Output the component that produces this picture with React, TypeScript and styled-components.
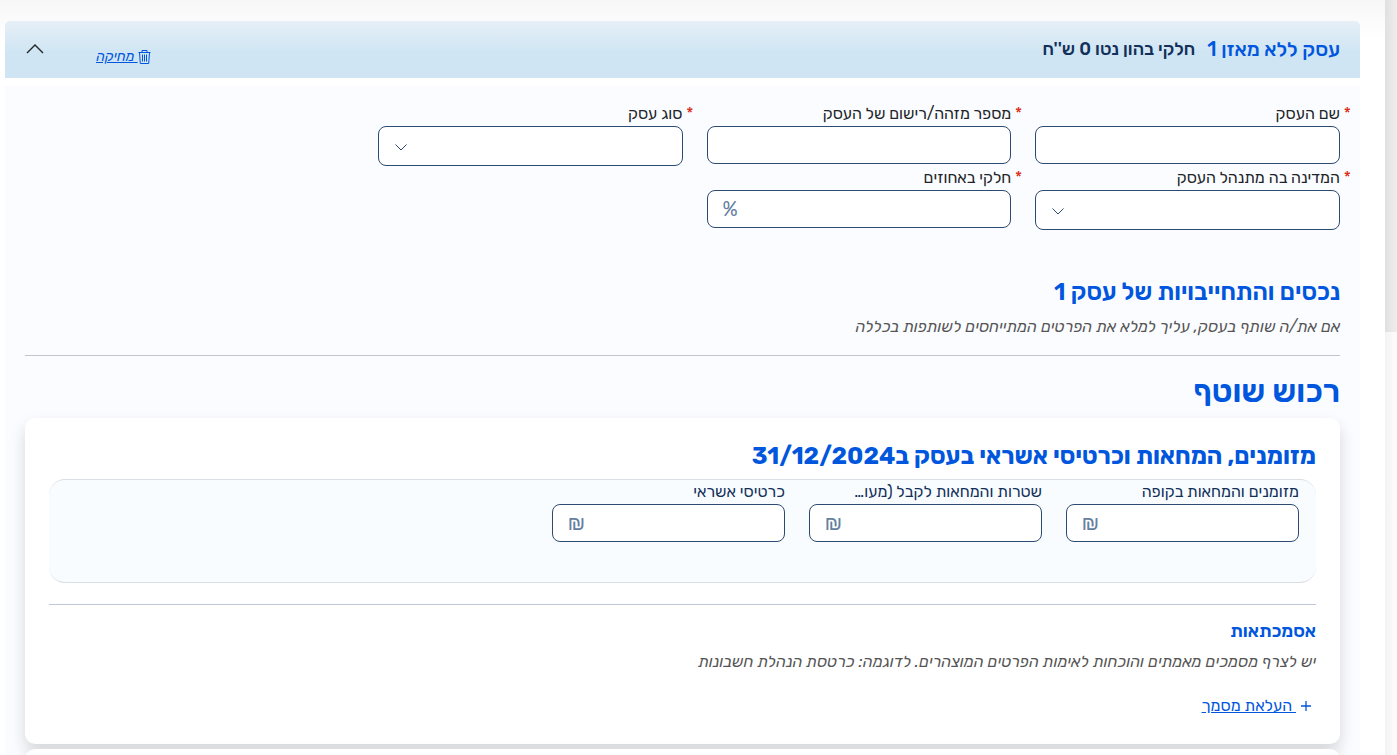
import React, { useId } from "react";
import styled, { createGlobalStyle } from "styled-components";

const GlobalStyle = createGlobalStyle`
  * { box-sizing: border-box; }
  body {
    margin: 0;
    background: #fafafa;
    color: #212529;
    font-family: Rubik, "Open Sans", "Liberation Sans", sans-serif;
    font-size: 16px;
    line-height: 24px;
  }
  button, input, select { font: inherit; color: inherit; }
  h1, h2, h3, h4, p { margin: 0; }
`;

const Page = styled.div`
  display: flex;
  height: 100vh;
  overflow: hidden;
`;

const Sheet = styled.main`
  flex: 1;
  min-width: 0;
  padding: 21px 25px 0 5px;
  background: linear-gradient(#f7f7f7, #fff 40px);
`;

const Gutter = styled.div`
  width: 12px;
  background: linear-gradient(to right, #e0e0e0, #ececec 10px) top / 100% 332px no-repeat,
    linear-gradient(to right, #f3f3f3, #fbfbfb 10px);
`;

const Header = styled.header`
  display: flex;
  align-items: center;
  height: 57px;
  padding: 0 20px 2px 21px;
  border-radius: 5px 5px 0 0;
  background: linear-gradient(#e6eff7, #cfe5f3 32px);
`;

const HeaderTitle = styled.h2`
  color: #0056dd;
  font-size: 20px;
  font-weight: 500;
  margin-inline-end: 12px;
`;

const HeaderNote = styled.span`
  color: #12305a;
  font-size: 18px;
  font-weight: 500;
  flex: 1;
`;

const DeleteButton = styled.button`
  display: flex;
  align-items: center;
  margin-top: 17px;
  margin-inline-end: 52px;
  padding: 0;
  border: 0;
  background: none;
  color: #0056dd;
  font-size: 14px;
  font-style: italic;
  text-decoration: underline;
  white-space: pre;
`;

const CollapseButton = styled.button`
  display: flex;
  padding: 0;
  border: 0;
  background: none;
  color: #212529;
`;

const Body = styled.section`
  margin-top: 8px;
  padding: 16px 20px 40px;
  background: #fbfcff;
`;

const FieldGrid = styled.div`
  display: grid;
  grid-template-columns: repeat(4, 1fr);
  column-gap: 24px;
  margin-inline-end: 24px;
`;

const MoneyGrid = styled.div`
  display: grid;
  grid-template-columns: repeat(5, 1fr);
  column-gap: 24px;
  margin-inline-end: -11px;
`;

const FieldBox = styled.div`
  min-width: 0;
  min-height: 64px;
`;

const Label = styled.label<{ $required?: boolean; $navy?: boolean }>`
  display: flex;
  gap: 4px;
  margin-inline-start: ${(p) => (p.$required ? "-11px" : "0")};
  color: ${(p) => (p.$navy ? "#12305a" : "#212529")};
  white-space: nowrap;
`;

const LabelText = styled.span`
  overflow: hidden;
  text-overflow: ellipsis;
`;

const Star = styled.span`
  width: 7px;
  color: #d9301a;
`;

const Control = styled.div<{ $tall?: boolean }>`
  display: flex;
  align-items: center;
  height: ${(p) => (p.$tall ? 40 : 38)}px;
  border: 1px solid #2d4a73;
  border-radius: 8px;
  background: #fff;
  color: #64809f;
`;

const Input = styled.input`
  flex: 1;
  min-width: 0;
  height: 100%;
  padding: 0 12px;
  border: 0;
  outline: 0;
  background: none;
`;

const Select = styled.select`
  flex: 1;
  min-width: 0;
  height: 100%;
  padding: 0 12px;
  border: 0;
  outline: 0;
  appearance: none;
  background: none;
`;

const Unit = styled.span`
  margin-inline-end: 15px;
  font-size: 20px;
`;

const ArrowIcon = styled.svg`
  margin-inline-end: 16px;
  margin-top: 2px;
  color: #2d4a73;
`;

const SectionTitle = styled.h2`
  margin-top: 46px;
  color: #0056dd;
  font-size: 24px;
  font-weight: 600;
  line-height: 32px;
`;

const Hint = styled.p`
  margin-top: 7px;
  color: #555;
  font-style: italic;
`;

const Rule = styled.hr<{ $blue?: boolean }>`
  height: 1px;
  margin: ${(p) => (p.$blue ? "21px 0 14px" : "16px 0 15px")};
  border: 0;
  background: ${(p) => (p.$blue ? "#bcc8d8" : "#c0c5cc")};
`;

const GroupTitle = styled.h1`
  color: #0056dd;
  font-size: 32px;
  font-weight: 600;
  line-height: 40px;
`;

const Card = styled.section`
  min-height: 326px;
  margin-top: 7px;
  padding: 24px;
  border-radius: 10px;
  background: #fff;
  box-shadow: 0 8px 16px rgba(0, 0, 0, 0.15);

  & + & { margin-top: 5px; }
`;

const CardTitle = styled.h3`
  color: #0056dd;
  font-size: 24px;
  font-weight: 700;
  line-height: 28px;
`;

const MoneyPanel = styled.div`
  height: 104px;
  margin-top: 9px;
  padding-inline-start: 17px;
  border: solid #dadfe5;
  border-width: 1px 0;
  border-radius: 16px;
  background: #f8fcff;
`;

const SubTitle = styled.h4`
  color: #0056dd;
  font-size: 18px;
  font-weight: 600;
`;

const Upload = styled.div`
  display: flex;
  align-items: center;
  gap: 5px;
  margin-top: 20px;
  padding-inline-start: 5px;
  color: #0056dd;
`;

const UploadLink = styled.a`
  color: #0056dd;
  white-space: pre;
`;

type FieldProps = {
  label: string;
  required?: boolean;
  select?: boolean;
  unit?: string;
};

function Field({ label, required, select, unit }: FieldProps) {
  const id = useId();
  return (
    <FieldBox>
      <Label htmlFor={id} $required={required} $navy={!required}>
        {required && <Star>*</Star>}
        <LabelText>{label}</LabelText>
      </Label>
      <Control $tall={select}>
        {select ? <Select id={id} /> : <Input id={id} type="text" />}
        {select && (
          <ArrowIcon width="12" height="7" viewBox="0 0 12 7" fill="none" stroke="currentColor">
            <path d="M0.5 0.5 6 6 11.5 0.5" />
          </ArrowIcon>
        )}
        {unit && <Unit>{unit}</Unit>}
      </Control>
    </FieldBox>
  );
}

export default function App() {
  return (
    <Page dir="rtl" lang="he">
      <GlobalStyle />
      <Gutter />
      <Sheet>
        <Header>
          <HeaderTitle>עסק ללא מאזן 1</HeaderTitle>
          <HeaderNote>חלקי בהון נטו 0 ש''ח</HeaderNote>
          <DeleteButton type="button">
            <svg width="13" height="14" viewBox="0 0 13 14" fill="none" stroke="currentColor">
              <path d="M0.5 2.5H12.5M4 2.5V0.5H9V2.5M1.5 2.5 2.3 13.5H10.7L11.5 2.5M4.5 4.5V11.5M6.5 4.5V11.5M8.5 4.5V11.5" />
            </svg>
            {" מחיקה"}
          </DeleteButton>
          <CollapseButton type="button" aria-label="סגירה">
            <svg width="18" height="10" viewBox="0 0 18 10" fill="none" stroke="currentColor" strokeWidth="1.4">
              <path d="M1 9 9 1 17 9" />
            </svg>
          </CollapseButton>
        </Header>
        <Body>
          <FieldGrid>
            <Field label="שם העסק" required />
            <Field label="מספר מזהה/רישום של העסק" required />
            <Field label="סוג עסק" required select />
            <span />
            <Field label="המדינה בה מתנהל העסק" required select />
            <Field label="חלקי באחוזים" required unit="%" />
          </FieldGrid>
          <SectionTitle>נכסים והתחייבויות של עסק 1</SectionTitle>
          <Hint>אם את/ה שותף בעסק, עליך למלא את הפרטים המתייחסים לשותפות בכללה</Hint>
          <Rule />
          <GroupTitle>רכוש שוטף</GroupTitle>
          <Card>
            <CardTitle>מזומנים, המחאות וכרטיסי אשראי בעסק ב31/12/2024</CardTitle>
            <MoneyPanel>
              <MoneyGrid>
                <Field label="מזומנים והמחאות בקופה" unit="₪" />
                <Field label="שטרות והמחאות לקבל (מעו…" unit="₪" />
                <Field label="כרטיסי אשראי" unit="₪" />
              </MoneyGrid>
            </MoneyPanel>
            <Rule $blue />
            <SubTitle>אסמכתאות</SubTitle>
            <Hint>יש לצרף מסמכים מאמתים והוכחות לאימות הפרטים המוצהרים. לדוגמה: כרטסת הנהלת חשבונות</Hint>
            <Upload>
              <svg width="10" height="10" viewBox="0 0 10 10" stroke="currentColor" strokeWidth="1.3">
                <path d="M5 0V10M0 5H10" />
              </svg>
              <UploadLink href="#upload">{" העלאת מסמך"}</UploadLink>
            </Upload>
          </Card>
          <Card />
        </Body>
      </Sheet>
    </Page>
  );
}
